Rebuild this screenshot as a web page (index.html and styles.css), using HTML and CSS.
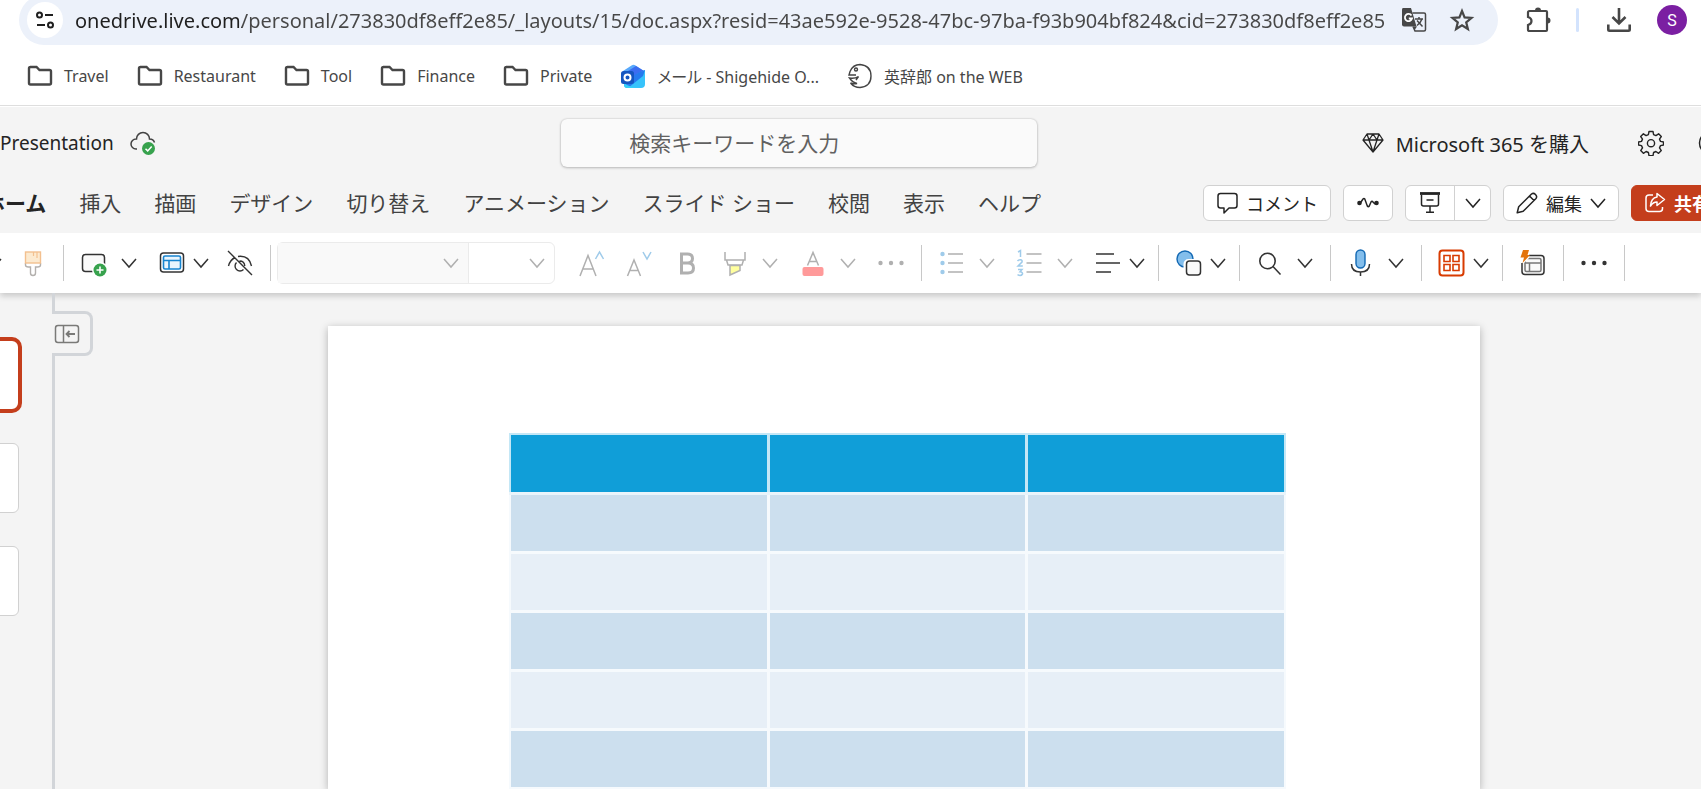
FILE: index.html
```
<!DOCTYPE html>
<html lang="ja">
<head>
    <meta charset="UTF-8">
    <meta name="viewport" content="width=device-width, initial-scale=1.0">
    <title>Presentation</title>
    <link rel="stylesheet" href="styles.css">
</head>
<body>
    <!-- shared icons -->
    <svg class="sprite" aria-hidden="true">
        <symbol id="chevron" viewBox="0 0 16 16"><path d="M1 4l7 8 7-8" fill="none" stroke="currentColor" stroke-width="1.5"/></symbol>
        <symbol id="folder" viewBox="0 0 26 22"><path d="M3 2h6.500l3 3H22.500q1.500 0 1.500 1.500V18q0 1.500-1.500 1.500H3.500Q2 19.500 2 18V3.500Q2 2 3.500 2z" fill="none" stroke="#474747" stroke-width="2.400"/></symbol>
        <symbol id="dots" viewBox="0 0 28 28"><g fill="currentColor"><circle cx="3.500" cy="14" r="2.200"/><circle cx="14" cy="14" r="2.200"/><circle cx="24.500" cy="14" r="2.200"/></g></symbol>
    </svg>

    <div class="toolbar">
        <div class="address">
            <button class="site-info" aria-label="サイト情報">
                <svg width="20" height="20" viewBox="0 0 20 20" fill="none" stroke="#1f1f1f" stroke-width="2"><circle cx="4.500" cy="5" r="2.500"/><path d="M10 5h8M2 15h8"/><circle cx="15.500" cy="15" r="2.500"/></svg>
            </button>
            <input class="url" type="text" aria-label="アドレス" value="onedrive.live.com/personal/273830df8eff2e85/_layouts/15/doc.aspx?resid=43ae592e-9528-47bc-97ba-f93b904bf824&amp;cid=273830df8eff2e85">
            <button class="plain" aria-label="翻訳">
                <svg width="28" height="28" viewBox="0 0 28 28"><path d="M3 2h8l5.500 18.500H4Q2 20.500 2 18.500V3.500Q2 2 3 2z" fill="#474747"/><path d="M12.500 7H24q1.500 0 1.500 1.500v15Q25.500 25 24 25H15l-2-4.500" fill="none" stroke="#474747" stroke-width="1.500"/><path d="M14 20.500h3L14 25z" fill="#474747"/><path d="M11.500 9.500A3.600 3.600 0 1 0 12 12.500H8.800" fill="none" stroke="#fff" stroke-width="1.800"/><path d="M15 13h8M19 11v2M22 13q-1.500 4-5 6.500M17 14.500l5.500 6" fill="none" stroke="#474747" stroke-width="1.500"/></svg>
            </button>
            <button class="plain" aria-label="ブックマーク">
                <svg width="28" height="28" viewBox="0 0 28 28"><path d="M14 5l2.600 6.400 6.900.5-5.300 4.400 1.700 6.700-5.900-3.700L8.100 23l1.700-6.700-5.300-4.400 6.900-.5z" fill="none" stroke="#474747" stroke-width="2.200"/></svg>
            </button>
        </div>
        <button class="plain" aria-label="拡張機能">
            <svg width="28" height="28" viewBox="0 0 28 28"><path d="M6.500 5H23q1 0 1 1V24q0 1-1 1H6.500q-1.500 0-1.500-1.500V19q3.500-1 3.500-4T5 11V6.500Q5 5 6.500 5z" fill="none" stroke="#474747" stroke-width="2.200"/><path d="M12 4.500a3 3 0 0 1 6 0zM24.500 11.500a3 3 0 0 1 0 6z" fill="#474747"/></svg>
        </button>
        <span class="toolbar-line"></span>
        <button class="plain" aria-label="ダウンロード">
            <svg width="28" height="28" viewBox="0 0 28 28" fill="none" stroke="#474747" stroke-width="2.600"><path d="M15 2v15M8.500 11l6.500 6.500 6.500-6.500M4.300 18.500v5q0 1.200 1.200 1.200h19q1.200 0 1.200-1.200v-5"/></svg>
        </button>
        <button class="avatar">S</button>
    </div>

    <nav class="bookmarks">
        <a href="#"><svg width="26" height="22"><use href="#folder"/></svg>Travel</a>
        <a href="#"><svg width="26" height="22"><use href="#folder"/></svg>Restaurant</a>
        <a href="#"><svg width="26" height="22"><use href="#folder"/></svg>Tool</a>
        <a href="#"><svg width="26" height="22"><use href="#folder"/></svg>Finance</a>
        <a href="#"><svg width="26" height="22"><use href="#folder"/></svg>Private</a>
        <a href="#">
            <svg width="26" height="26" viewBox="0 0 26 26"><path d="M3 8L11.500 2.500q2-1.500 4 0L24 8l-4 11H5z" fill="#58a9fb"/><path d="M8 8l8-5 8 5v7l-10 3z" fill="#3b6df0"/><path d="M17 11l8-4v14q0 4-4 4H8z" fill="#37c3fb"/><path d="M4 19l14-9 7-3-2 6L8 25q-4 0-4-4z" fill="#2579ee"/><path d="M4 20q6 5 17 5H7q-3 0-3-3z" fill="#35d0f8"/><rect x="1" y="8" width="13" height="13" rx="2.500" fill="#1556c0"/><circle cx="7.500" cy="14.500" r="3" fill="none" stroke="#fff" stroke-width="2"/></svg>メール - Shigehide O...
        </a>
        <a href="#">
            <svg width="26" height="26" viewBox="0 0 26 26" fill="none" stroke="#444" stroke-width="1.400"><path d="M3 8.500Q6 1.500 13 1.500q11 1 11 11.500T13 24.500q-6 0-9.500-4.500 3 1.500 6.500.5-4.500-1-7.500-5.500 5 1 9-1.500l-2.500 3.500M3 8.500l-1 3.500h7"/><circle cx="9" cy="6.500" r="1.500"/></svg>英辞郎 on the WEB
        </a>
    </nav>

    <header class="app-header">
        <div class="title-row">
            <div class="doc-title">
                <span>Presentation</span>
                <svg width="28" height="28" viewBox="0 0 28 28"><path d="M8 20H7a5 5 0 0 1 0-10h.5a6.500 6.500 0 0 1 13 0q4 .2 5 3.500" fill="none" stroke="#424242" stroke-width="1.500"/><circle cx="19.500" cy="19.500" r="6.500" fill="#37a24d"/><path d="M16.500 19.700l2.200 2.200 4-4.500" fill="none" stroke="#fff" stroke-width="1.500"/></svg>
            </div>
            <input class="search" type="search" placeholder="検索キーワードを入力" aria-label="検索">
            <div class="account">
                <button class="premium">
                    <svg width="22" height="22" viewBox="0 0 22 22" fill="none" stroke="#242424" stroke-width="1.300" stroke-linejoin="round"><path d="M5 2h12l4 6-10 12L1 8zM1 8h20M7 8l4 12 4-12M5 2l2 6 4-6 4 6 2-6"/></svg>
                    Microsoft 365 を購入
                </button>
                <button class="round" aria-label="設定">
                    <svg width="26" height="26" viewBox="0 0 26 26" fill="none" stroke="#242424" stroke-width="1.400" stroke-linejoin="round"><path d="M11 1.500h4l.6 3.100 2.300 1 2.700-1.800 2.700 2.700-1.800 2.600 1 2.300 3 .6v3l-3 .6-1 2.300 1.800 2.700-2.700 2.700-2.700-1.800-2.300 1-.6 3.100h-4l-.6-3.100-2.300-1-2.700 1.800-2.700-2.700 1.800-2.700-1-2.300-3-.6v-3l3-.6 1-2.300-1.800-2.600 2.700-2.700 2.700 1.800 2.300-1z"/><circle cx="13" cy="13.200" r="3.600"/></svg>
                </button>
                <button class="round" aria-label="ヘルプ">
                    <svg width="26" height="26" viewBox="0 0 26 26"><circle cx="13" cy="13" r="11.500" fill="none" stroke="#242424" stroke-width="1.500"/></svg>
                </button>
            </div>
        </div>

        <div class="tab-row">
            <nav class="tabs">
                <button class="active">ホーム</button>
                <button>挿入</button>
                <button>描画</button>
                <button>デザイン</button>
                <button>切り替え</button>
                <button>アニメーション</button>
                <button>スライド ショー</button>
                <button>校閲</button>
                <button>表示</button>
                <button>ヘルプ</button>
            </nav>
            <div class="actions">
                <button class="action">
                    <svg width="22" height="22" viewBox="0 0 22 22" fill="none" stroke="#242424" stroke-width="1.500" stroke-linejoin="round"><path d="M4.500 1.500h14q2.500 0 2.500 2.500v9.500q0 2.500-2.500 2.500H13L8 21v-5H4.500Q2 16 2 13.500V4q0-2.500 2.500-2.500z"/></svg>
                    コメント
                </button>
                <button class="action" aria-label="アクティビティ">
                    <svg width="22" height="22" viewBox="0 0 22 22"><path d="M3 11.500L6 7q1-1 1.800 0l2.500 7q1 1.500 2 0L14 10q1-1.500 2 0l2 2" fill="none" stroke="#242424" stroke-width="1.500"/><circle cx="2.500" cy="11" r="2.300" fill="#242424"/><circle cx="19.500" cy="11" r="2.300" fill="#242424"/></svg>
                </button>
                <div class="split-action">
                    <button aria-label="プレゼンテーション">
                        <svg width="22" height="22" viewBox="0 0 22 22" fill="none" stroke="#242424" stroke-width="1.500"><path d="M1 1.500h20" stroke-width="2.800"/><path d="M2.500 3v9q0 2 2 2h13q2 0 2-2V3M7.500 8h7M11 14v6M7 20.200h8"/></svg>
                    </button>
                    <button aria-label="その他"><svg width="16" height="16"><use href="#chevron"/></svg></button>
                </div>
                <button class="action">
                    <svg width="22" height="22" viewBox="0 0 22 22" fill="none" stroke="#242424" stroke-width="1.500" stroke-linejoin="round"><path d="M1.200 20.800l1.500-6L15.500 2q2-1.500 4 .5t.5 4L7.200 19.300zM13.500 4l4.500 4.500"/></svg>
                    編集
                    <svg width="16" height="16"><use href="#chevron"/></svg>
                </button>
                <button class="action share">
                    <svg width="22" height="22" viewBox="0 0 22 22" fill="none" stroke="#fff" stroke-width="1.500" stroke-linejoin="round"><path d="M9 3H5Q2 3 2 6v10.500q0 3 3 3h10.500q3 0 3-3V15"/><path d="M13 1.500l7.500 6-7.500 6V10q-4 0-6.500 4Q7 6 13 5z"/></svg>
                    共有
                </button>
            </div>
        </div>
    </header>

    <div class="ribbon">
        <div class="group group-first">
            <button class="menu" aria-label="貼り付け">
                <svg width="28" height="28" viewBox="0 0 28 28"></svg>
                <svg width="16" height="16"><use href="#chevron"/></svg>
            </button>
            <button class="tool" aria-label="書式のコピー">
                <svg width="28" height="28" viewBox="0 0 28 28"><path d="M6.500 14v2q0 2 3 2h2v6q0 2.500 2.500 2.500t2.500-2.500v-6h2q3 0 3-2v-2" fill="none" stroke="#b3b0ad" stroke-width="1.400"/><rect x="6.500" y="3" width="15" height="11" fill="#fcead0" stroke="#f3c08f" stroke-width="1.400"/><path d="M14.500 3v4M18 3v6" stroke="#f3c08f" stroke-width="1.200"/></svg>
            </button>
        </div>
        <div class="group">
            <div class="split">
                <button aria-label="新しいスライド">
                    <svg width="28" height="28" viewBox="0 0 28 28"><rect x="2.500" y="5.500" width="22" height="17" rx="3" fill="#fafafa" stroke="#333" stroke-width="1.500"/><circle cx="20" cy="21" r="8" fill="#fff"/><circle cx="20" cy="21" r="6.500" fill="#37a24d"/><path d="M20 17.500v7M16.500 21h7" stroke="#fff" stroke-width="1.600"/></svg>
                </button>
                <button aria-label="その他"><svg width="16" height="16"><use href="#chevron"/></svg></button>
            </div>
            <button class="menu" aria-label="レイアウト">
                <svg width="28" height="28" viewBox="0 0 28 28"><rect x="2.500" y="4" width="23" height="19" rx="3" fill="#fff" stroke="#333" stroke-width="1.500"/><rect x="5.500" y="7" width="17" height="13" rx="1.500" fill="#eaf5fd" stroke="#1784cf" stroke-width="1.600"/><path d="M5.500 11.500h17M11 11.500V20" stroke="#1784cf" stroke-width="1.600"/></svg>
                <svg width="16" height="16"><use href="#chevron"/></svg>
            </button>
            <button class="tool" aria-label="非表示">
                <svg width="28" height="28" viewBox="0 0 28 28" fill="none" stroke="#333" stroke-width="1.400"><path d="M2 2l24 24M2.500 17Q4 11 9 8.500M12 7.500Q23 6 25.500 17M17.500 20.500A4.800 4.800 0 1 1 10.500 13.500M13.500 12q5 0 5.300 5"/></svg>
            </button>
        </div>
        <div class="group">
            <div class="font-box">
                <label class="combo combo-name">
                    <select aria-label="フォント" disabled><option></option></select>
                    <svg width="16" height="16"><use href="#chevron"/></svg>
                </label>
                <label class="combo combo-size">
                    <select aria-label="フォント サイズ" disabled><option></option></select>
                    <svg width="16" height="16"><use href="#chevron"/></svg>
                </label>
            </div>
            <button class="tool" aria-label="フォントの拡大" disabled>
                <svg width="28" height="28" viewBox="0 0 28 28" fill="none" stroke="#b0b0b0" stroke-width="1.500"><path d="M3 27L11 6.500 19 27M5.800 20h10.400"/><path d="M18.500 10l4-7 4 7" stroke="#9fcbea"/></svg>
            </button>
            <button class="tool" aria-label="フォントの縮小" disabled>
                <svg width="28" height="28" viewBox="0 0 28 28" fill="none" stroke="#b0b0b0" stroke-width="1.500"><path d="M2.500 27L9 11l6.500 16M4.800 21.500h8.400"/><path d="M18 3l4 7 4-7" stroke="#9fcbea"/></svg>
            </button>
            <button class="tool" aria-label="太字" disabled>
                <svg width="28" height="28" viewBox="0 0 28 28"><path d="M8.500 5h6q5 0 5 4.500t-5 4.500h-6zM8.500 14h6.500q5.500 0 5.500 5t-5.500 5H8.500z" fill="none" stroke="#b0b0b0" stroke-width="3"/></svg>
            </button>
            <div class="split">
                <button aria-label="蛍光ペン" disabled>
                    <svg width="28" height="28" viewBox="0 0 28 28" fill="none" stroke="#b0b0b0" stroke-width="1.500"><path d="M9 16.500h10v5L9 26z" fill="#ffff9e"/><path d="M4 3v8h20V3M5.500 11l1.500 5h14l1.500-5"/></svg>
                </button>
                <button aria-label="その他" disabled><svg width="16" height="16"><use href="#chevron"/></svg></button>
            </div>
            <div class="split">
                <button aria-label="フォントの色" disabled>
                    <svg width="28" height="28" viewBox="0 0 28 28"><path d="M8.500 16.500L14 3.500l5.500 13M10.300 12.500h7.400" fill="none" stroke="#b0b0b0" stroke-width="1.500"/><rect x="3.500" y="18" width="21" height="9" rx="2" fill="#ff9a9a"/></svg>
                </button>
                <button aria-label="その他" disabled><svg width="16" height="16"><use href="#chevron"/></svg></button>
            </div>
            <button class="tool" aria-label="その他のフォント" disabled><svg width="28" height="28"><use href="#dots"/></svg></button>
        </div>
        <div class="group">
            <div class="split">
                <button aria-label="箇条書き" disabled>
                    <svg width="28" height="28" viewBox="0 0 28 28"><g fill="#9fcbea"><circle cx="4.500" cy="5" r="2.200"/><circle cx="4.500" cy="14" r="2.200"/><circle cx="4.500" cy="23" r="2.200"/></g><path d="M10 5h15M10 14h15M10 23h15" stroke="#b0b0b0" stroke-width="1.500"/></svg>
                </button>
                <button aria-label="その他" disabled><svg width="16" height="16"><use href="#chevron"/></svg></button>
            </div>
            <div class="split">
                <button aria-label="段落番号" disabled>
                    <svg width="28" height="28" viewBox="0 0 28 28" fill="none"><g stroke="#9fcbea" stroke-width="1.500"><path d="M2 3l2.500-1.500V8M1.500 12q1-1.500 3-1.300 2 .3 1.500 2.300L2 17h4.800M2 20.500h4l-2 2.300q2.800.2 2.500 2.200-1.500 2.500-5 .7"/></g><path d="M10.500 5h15M10.500 14h15M10.500 23h15" stroke="#b0b0b0" stroke-width="1.500"/></svg>
                </button>
                <button aria-label="その他" disabled><svg width="16" height="16"><use href="#chevron"/></svg></button>
            </div>
            <button class="menu" aria-label="配置">
                <svg width="28" height="28" viewBox="0 0 28 28"><path d="M2 5h18M2 14h24M2 23h15" stroke="#333" stroke-width="1.600"/></svg>
                <svg width="16" height="16"><use href="#chevron"/></svg>
            </button>
        </div>
        <div class="group">
            <button class="menu" aria-label="図形">
                <svg width="28" height="28" viewBox="0 0 28 28"><circle cx="10" cy="10" r="8" fill="#83beec" stroke="#1268b3" stroke-width="1.400"/><rect x="10.500" y="12" width="15.500" height="15" rx="3" fill="#fafafa" stroke="#fff" stroke-width="4"/><rect x="11.500" y="12" width="14" height="14" rx="3" fill="#fafafa" stroke="#333" stroke-width="1.500"/></svg>
                <svg width="16" height="16"><use href="#chevron"/></svg>
            </button>
        </div>
        <div class="group">
            <div class="split">
                <button aria-label="検索">
                    <svg width="28" height="28" viewBox="0 0 28 28" fill="none" stroke="#333" stroke-width="1.600"><circle cx="11.500" cy="12" r="7.700"/><path d="M17 17.500l7.500 8"/></svg>
                </button>
                <button aria-label="その他"><svg width="16" height="16"><use href="#chevron"/></svg></button>
            </div>
        </div>
        <div class="group">
            <div class="split">
                <button aria-label="ディクテーション">
                    <svg width="28" height="28" viewBox="0 0 28 28"><rect x="9" y="1" width="9" height="18" rx="4.500" fill="#83beec" stroke="#1268b3" stroke-width="1.400"/><path d="M4.500 15q0 8 9 8t9-8M13.500 23v4" fill="none" stroke="#333" stroke-width="1.500"/></svg>
                </button>
                <button aria-label="その他"><svg width="16" height="16"><use href="#chevron"/></svg></button>
            </div>
        </div>
        <div class="group">
            <button class="menu" aria-label="アドイン">
                <svg width="28" height="28" viewBox="0 0 28 28" fill="none" stroke="#d83b01"><rect x="1.500" y="1.500" width="24" height="25" rx="3" stroke-width="2"/><path d="M6 6.500h6v6H6zM15 6.500h6v6h-6zM6 15.500h6v6H6zM15 15.500h6v6h-6z" stroke-width="1.600"/></svg>
                <svg width="16" height="16"><use href="#chevron"/></svg>
            </button>
        </div>
        <div class="group">
            <button class="tool" aria-label="デザイナー">
                <svg width="28" height="28" viewBox="0 0 28 28"><rect x="3" y="6.500" width="22" height="19" rx="3" fill="#fafafa" stroke="#333" stroke-width="1.500"/><rect x="6" y="9.500" width="16" height="13" rx="1.500" fill="none" stroke="#777" stroke-width="1.500"/><path d="M6 14h16M10.500 14v8.500" stroke="#777" stroke-width="1.500"/><path d="M0 0h10v9l-5 5H0z" fill="#fff"/><path d="M4 1h6L8.500 6H11L3.500 14 5 8.500H1.500z" fill="#e3730b"/></svg>
            </button>
        </div>
        <div class="group group-last">
            <button class="tool" aria-label="その他のオプション"><svg width="28" height="28"><use href="#dots"/></svg></button>
        </div>
    </div>

    <main class="workspace">
        <aside class="thumbs">
            <button class="thumb selected" aria-label="スライド 1"></button>
            <button class="thumb" aria-label="スライド 2"></button>
            <button class="thumb" aria-label="スライド 3"></button>
            <button class="collapse" aria-label="サムネイルを折りたたむ">
                <svg width="26" height="20" viewBox="0 0 26 20" fill="none" stroke="#7a7a78" stroke-width="1.500"><rect x="1.500" y="1.500" width="23" height="17" rx="2.500"/><path d="M9.500 1.500v17"/><path d="M21 10h-8M15.500 7l-3 3 3 3" stroke-width="1.800"/></svg>
            </button>
        </aside>
        <div class="slide">
            <table>
                <thead>
                    <tr><th></th><th></th><th></th></tr>
                </thead>
                <tbody>
                    <tr><td></td><td></td><td></td></tr>
                    <tr><td></td><td></td><td></td></tr>
                    <tr><td></td><td></td><td></td></tr>
                    <tr><td></td><td></td><td></td></tr>
                    <tr><td></td><td></td><td></td></tr>
                    <tr><td></td><td></td><td></td></tr>
                </tbody>
            </table>
        </div>
    </main>
</body>
</html>
```
FILE: styles.css
```
* {
    box-sizing: border-box;
}

body {
    margin: 0;
    height: 100vh;
    display: flex;
    flex-direction: column;
    overflow: hidden;
    background: #fff;
    color: #242424;
    font-family: "Noto Sans", "Noto Sans CJK JP", sans-serif;
    font-size: 18px;
}

button, input, select {
    font: inherit;
    color: inherit;
    margin: 0;
}

button {
    display: flex;
    align-items: center;
    justify-content: center;
    flex-shrink: 0;
    padding: 0;
    border: 0;
    background: none;
    white-space: nowrap;
    cursor: pointer;
}

svg {
    display: block;
    flex-shrink: 0;
}

.sprite {
    position: absolute;
    width: 0;
    height: 0;
}

/* browser bar */
.toolbar {
    display: flex;
    align-items: center;
    gap: 25px;
    height: 50px;
    margin-top: -5px;
    padding: 0 14px 0 19px;
    flex-shrink: 0;
}

.address {
    flex: 1;
    display: flex;
    align-items: center;
    gap: 12px;
    min-width: 0;
    height: 50px;
    padding: 0 22px 0 8px;
    border-radius: 25px;
    background: #ecf1fa;
}

.address .plain + .plain {
    margin-left: 8px;
}

.site-info {
    width: 36px;
    height: 36px;
    border-radius: 50%;
    background: #fff;
}

/* host part is darker than the path */
.url {
    flex: 1;
    min-width: 0;
    height: 36px;
    padding: 0;
    border: 0;
    outline: 0;
    font-size: 20px;
    color: transparent;
    background: linear-gradient(to right, #1f1f1f 167px, #474747 167px);
    -webkit-background-clip: text;
    background-clip: text;
}

.toolbar-line {
    width: 3px;
    height: 24px;
    border-radius: 2px;
    background: #d3e3fd;
}

.avatar {
    width: 30px;
    height: 30px;
    border-radius: 50%;
    background: #7b1fa2;
    color: #fff;
    font-family: Roboto, sans-serif;
    font-size: 16px;
}

.bookmarks {
    display: flex;
    align-items: center;
    gap: 28px;
    height: 61px;
    padding: 2px 0 0 27px;
    border-bottom: 1px solid #dedede;
    flex-shrink: 0;
    font-size: 16px;
    font-feature-settings: "palt";
}

.bookmarks a {
    display: flex;
    align-items: center;
    gap: 11px;
    color: #474747;
    text-decoration: none;
    white-space: nowrap;
}

/* app header */
.app-header {
    flex-shrink: 0;
    border-top: 1px solid #fff;
    background: #f4f4f4;
}

.title-row {
    display: grid;
    grid-template-columns: 33% 476px 1fr;
    align-items: center;
    height: 72px;
    font-size: 20px;
}

.doc-title {
    display: flex;
    align-items: center;
    gap: 15px;
    font-size: 19px;
}

.search {
    height: 48px;
    padding: 0 20px 0 68px;
    border: 0;
    border-radius: 6px;
    background: #fafafa;
    box-shadow: 0 0 2px rgba(0, 0, 0, 0.2), 0 1px 3px rgba(0, 0, 0, 0.2);
    font-size: 21px;
}

.search::placeholder {
    color: #616161;
    opacity: 1;
}

.account {
    display: flex;
    align-items: center;
    justify-content: flex-end;
    margin-right: -40px;
}

.premium {
    gap: 12px;
    margin-right: 32px;
}

.round {
    width: 60px;
    height: 48px;
}

.tab-row {
    display: flex;
    justify-content: space-between;
    padding: 6px 0 12px;
}

.tabs {
    display: flex;
    gap: 33px;
    margin-left: -16px;
    padding-bottom: 2px;
    font-size: 21px;
    color: #424242;
}

.tabs .active {
    color: #242424;
    font-weight: bold;
}

.actions {
    display: flex;
    gap: 12px;
    margin-right: -40px;
}

.action, .split-action {
    height: 36px;
    border: 1px solid #d1d1d1;
    border-radius: 6px;
    background: #fff;
}

.action {
    gap: 8px;
    min-width: 50px;
    padding: 0 12px;
}

.split-action {
    display: flex;
}

.split-action button {
    width: 48px;
}

.split-action button + button {
    width: 36px;
    border-left: 1px solid #d1d1d1;
}

.share {
    width: 110px;
    justify-content: flex-start;
    border-color: #c43e1c;
    background: #c43e1c;
    color: #fff;
    font-weight: bold;
}

/* ribbon */
.ribbon {
    position: relative;
    display: flex;
    align-items: center;
    height: 60px;
    flex-shrink: 0;
    background: #fff;
    box-shadow: 0 3px 6px rgba(0, 0, 0, 0.18);
    clip-path: inset(0 0 -12px 0);
    color: #333;
}

.group {
    display: flex;
    align-items: center;
    flex-shrink: 0;
    height: 36px;
    padding: 0 6px;
    border-left: 1px solid #c8c8c8;
}

.group-first {
    margin-left: -65px;
    border-left: 0;
}

.group-last {
    border-right: 1px solid #c8c8c8;
}

.tool {
    width: 48px;
    height: 42px;
}

.split {
    display: flex;
}

.split button {
    width: 48px;
    height: 42px;
}

.split button + button {
    width: 30px;
    padding-left: 3px;
    justify-content: flex-start;
}

.menu {
    width: 68px;
    height: 42px;
    padding-left: 10px;
    gap: 7px;
    justify-content: flex-start;
}

.ribbon button:disabled {
    color: #b0b0b0;
}

.font-box {
    display: flex;
    width: 278px;
    height: 42px;
    margin-right: 12px;
    border: 1px solid #ebebeb;
    border-radius: 6px;
}

.combo {
    position: relative;
    color: #b0b0b0;
}

.combo select {
    width: 100%;
    height: 100%;
    border: 0;
    background: none;
    appearance: none;
}

.combo svg {
    position: absolute;
    right: 9px;
    top: 12px;
    pointer-events: none;
}

.combo-name {
    flex: 1;
    border-right: 1px solid #ebebeb;
    background: #f9f9f9;
}

.combo-size {
    width: 85px;
}

/* slide area */
.workspace {
    flex: 1;
    display: flex;
    min-height: 0;
    background: #f4f4f4;
}

.thumbs {
    position: relative;
    width: 55px;
    padding-top: 44px;
    border-right: 3px solid #d2d5d9;
    flex-shrink: 0;
}

.thumb {
    display: block;
    width: 29px;
    height: 70px;
    margin: 0 0 33px -10px;
    border: 1px solid #d1d1d1;
    border-radius: 6px;
    background: #fff;
}

.thumb.selected {
    width: 32px;
    height: 76px;
    margin-bottom: 30px;
    border: 4px solid #c43e1c;
    border-radius: 10px;
}

/* tab that hangs over the pane border */
.collapse {
    position: absolute;
    top: 18px;
    left: 52px;
    width: 41px;
    height: 45px;
    padding-left: 2px;
    justify-content: flex-start;
    border: 3px solid #d2d5d9;
    border-left: 0;
    border-radius: 0 8px 8px 0;
    background: #f4f4f4;
}

.slide {
    flex: 1;
    margin: 33px 221px 0 273px;
    padding: 107px 194px 0 181px;
    background: #fff;
    box-shadow: 0 2px 8px rgba(0, 0, 0, 0.28);
    overflow: hidden;
}

table {
    width: 100%;
    table-layout: fixed;
    border-collapse: collapse;
}

th, td {
    height: 59px;
    padding: 0;
    border: 3px solid #f6fafd;
}

th {
    border-color: #c4e7f6;
    border-top-width: 2px;
    border-bottom-color: #eaf4fa;
    background: #109ed8;
}

th:first-child, td:first-child {
    border-left-width: 2px;
}

th:last-child, td:last-child {
    border-right-width: 2px;
}

tbody tr:nth-child(odd) {
    background: #ccdfee;
}

tbody tr:nth-child(even) {
    background: #e7eff7;
}
```
